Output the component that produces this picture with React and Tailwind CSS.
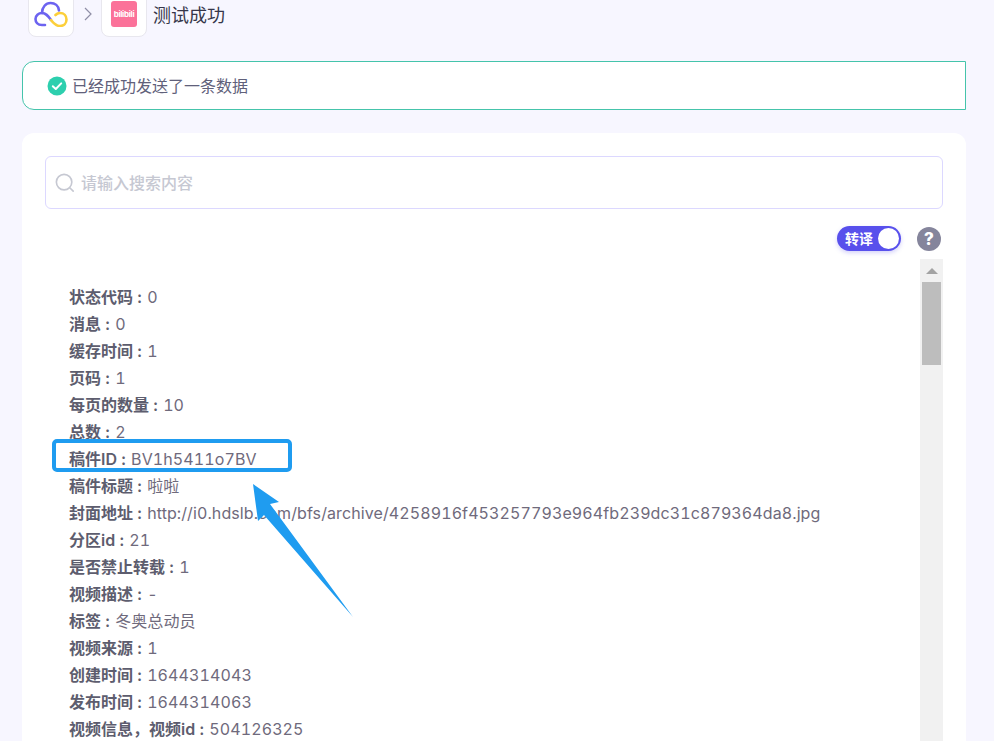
import React from "react";

const rows = [
  ["状态代码", "0"],
  ["消息", "0"],
  ["缓存时间", "1"],
  ["页码", "1"],
  ["每页的数量", "10"],
  ["总数", "2"],
  ["稿件ID", "BV1h5411o7BV"],
  ["稿件标题", "啦啦"],
  ["封面地址", "http://i0.hdslb.com/bfs/archive/4258916f453257793e964fb239dc31c879364da8.jpg"],
  ["分区id", "21"],
  ["是否禁止转载", "1"],
  ["视频描述", "-"],
  ["标签", "冬奥总动员"],
  ["视频来源", "1"],
  ["创建时间", "1644314043"],
  ["发布时间", "1644314063"],
  ["视频信息，视频id", "504126325"],
];

function Cloud() {
  return (
    <svg width="34" height="26" viewBox="0 0 34 26" fill="none" strokeWidth="2.6" strokeLinecap="round">
      <path d="M11 24 H8 C3.5 24 1.5 21 1.5 18 C1.5 14.5 4.5 12 8 12 C8 6 12 2 16.5 2 C21 2 24.5 5 25 9.5" stroke="#6c63f0" />
      <path d="M8 12 C12 12 14 15 17 19" stroke="#6c63f0" />
      <path d="M17 19 C20 23 22 25 26 25 C30 25 32.5 22 32.5 18.5 C32.5 15 30 12 26 12 C24 12 22.5 13 21.5 14" stroke="#fccf3a" />
    </svg>
  );
}

function Arrow() {
  return (
    <svg className="absolute left-[250px] top-[483px] pointer-events-none" width="105" height="136" viewBox="0 0 105 136">
      <path d="M3 1 L29 19 L20 21 L103 134 L14 32 L8 38 Z" fill="#1f9cf0" />
    </svg>
  );
}

export default function App() {
  return (
    <div className="relative h-[741px] w-[994px] overflow-hidden bg-[#f7f6ff] font-['Inter','Noto_Sans_CJK_SC',sans-serif]">
      <div className="-mt-[9px] ml-7 flex items-center">
        <div className="flex h-[46px] w-[46px] items-center justify-center rounded-lg border border-[#e8e7ee] bg-white">
          <Cloud />
        </div>
        <svg className="ml-[10px] mr-[9px]" width="8" height="14" viewBox="0 0 8 14" fill="none" stroke="#8f8ea6" strokeWidth="1.2">
          <path d="M1 1 L7 7 L1 13" />
        </svg>
        <div className="flex h-[46px] w-[46px] items-center justify-center rounded-lg border border-[#e8e7ee] bg-white">
          <div className="flex h-[26px] w-[26px] items-center justify-center rounded-[3px] bg-[#fb7299] text-[8px] font-bold leading-none tracking-[-0.3px] text-white">
            bilibili
          </div>
        </div>
        <span className="ml-[6px] mt-[4px] text-lg leading-6 text-[#36364a]">测试成功</span>
      </div>

      <div className="ml-[22px] mt-6 flex h-[49px] w-[944px] items-center rounded-l-xl border border-[#45c4ab] bg-white pl-6">
        <svg width="20" height="20" viewBox="0 0 20 20">
          <circle cx="10" cy="10" r="9.5" fill="#2dcfae" />
          <path d="M5.8 10.2 L8.8 13 L14.2 7.4" fill="none" stroke="#fff" strokeWidth="2" strokeLinecap="round" strokeLinejoin="round" />
        </svg>
        <span className="ml-[5px] text-base text-[#60607a]">已经成功发送了一条数据</span>
      </div>

      <div className="ml-[22px] mt-[23px] h-[700px] w-[944px] rounded-t-xl bg-white px-[23px] pt-[23px]">
        <div className="flex h-[53px] w-[898px] items-center rounded-md border border-[#dcd8ff] pl-[9px]">
          <svg width="20" height="20" viewBox="0 0 22 22" fill="none" stroke="#c6c8d2" strokeWidth="1.8" strokeLinecap="round">
            <circle cx="10" cy="10" r="8.5" />
            <path d="M16.5 16.5 L20 20" />
          </svg>
          <span className="ml-[6px] text-base font-medium text-[#c6c8d2]">请输入搜索内容</span>
        </div>

        <div className="mt-[17px] flex items-center justify-end pr-[2px]">
          <div className="flex h-[25px] w-[64px] items-center justify-between rounded-full bg-[#5850ec] pl-2 pr-[2px] shadow-[0_2px_4px_rgba(88,80,236,0.25)]">
            <span className="text-sm font-semibold leading-none text-white">转译</span>
            <span className="h-[21px] w-[21px] rounded-full bg-white" />
          </div>
          <svg className="ml-[16px]" width="24" height="24" viewBox="0 0 24 24">
            <circle cx="12" cy="12" r="12" fill="#85859c" />
            <text x="12" y="18" textAnchor="middle" fontSize="17" fontWeight="800" fill="#fff" fontFamily="Inter">?</text>
          </svg>
        </div>

        <div className="mt-[8px] flex h-[500px] justify-between">
          <div className="pl-[24px] pt-[25px]">
            {rows.map(([k, v]) => (
              <div key={k} className="h-[27px] text-base leading-[27px] whitespace-nowrap">
                <span className="font-semibold text-[#5d5d6e]">{k}</span>
                <span className="mx-[4px] font-semibold text-[#5d5d6e]">:</span>
                <span className="ml-[1px] tracking-[0.1px] tabular-nums text-[#6f6a7c]">{v}</span>
              </div>
            ))}
          </div>
          <div className="h-[500px] w-[23px] bg-[#f1f1f1]">
            <div className="flex h-[23px] items-center justify-center">
              <div className="h-0 w-0 border-x-[6px] border-b-[6px] border-x-transparent border-b-[#a3a3a3]" />
            </div>
            <div className="mx-[2px] h-[83px] bg-[#bdbdbd]" />
          </div>
        </div>
      </div>

      <div className="absolute left-[52px] top-[439px] h-[33px] w-[240px] rounded-[5px] border-[4px] border-[#1f9cf0]" />
      <Arrow />
    </div>
  );
}
